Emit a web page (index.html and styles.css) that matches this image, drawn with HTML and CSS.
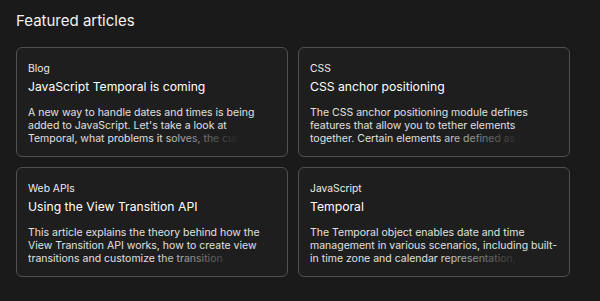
FILE: index.html
```html
<!DOCTYPE html>
<html lang="en">
<head>
    <meta charset="UTF-8">
    <meta name="viewport" content="width=device-width, initial-scale=1.0">
    <title>Featured articles</title>
    <link rel="stylesheet" href="styles.css">
</head>
<body>

<section class="featured">
    <h2>Featured articles</h2>

    <!-- Article cards -->
    <div class="card-grid">
        <a class="card" href="#">
            <span class="card-tag">Blog</span>
            <h3 class="card-title">JavaScript Temporal is coming</h3>
            <p class="card-text">A new way to handle dates and times is being added to JavaScript. Let's take a look at Temporal, what problems it solves, the current state, and what you'll find in the documentation.</p>
        </a>
        <a class="card" href="#">
            <span class="card-tag">CSS</span>
            <h3 class="card-title">CSS anchor positioning</h3>
            <p class="card-text">The CSS anchor positioning module defines features that allow you to tether elements together. Certain elements are defined as anchor elements; anchor-positioned elements can then have their size and position set.</p>
        </a>
        <a class="card" href="#">
            <span class="card-tag">Web APIs</span>
            <h3 class="card-title">Using the View Transition API</h3>
            <p class="card-text">This article explains the theory behind how the View Transition API works, how to create view transitions and customize the transition animations, and how to manipulate active view transitions.</p>
        </a>
        <a class="card" href="#">
            <span class="card-tag">JavaScript</span>
            <h3 class="card-title">Temporal</h3>
            <p class="card-text">The Temporal object enables date and time management in various scenarios, including built-in time zone and calendar representation, wall-clock time conversions, arithmetics, formatting, and more.</p>
        </a>
    </div>
</section>

</body>
</html>
```

FILE: styles.css
```css
body {
    margin: 0;
    background-color: #1a1a1a;
    color: #fff;
    font-family: Inter, "Noto Sans", sans-serif;
}
.featured {
    padding: 11px 16px 0;
    max-width: 554px;
}
.featured h2 {
    margin: 0 0 16px;
    font-size: 15px;
    font-weight: 400;
    line-height: 20px;
    color: #f2f2f2;
}
.card-grid {
    display: grid;
    grid-template-columns: repeat(2, 1fr);
    gap: 10px;
}
.card {
    display: flex;
    flex-direction: column;
    padding: 13px 11px 11px;
    border: 1px solid #505050;
    border-radius: 6px;
    background-color: #1e1e1e;
    color: inherit;
    text-decoration: none;
}
.card-tag {
    font-size: 10.3px;
    line-height: 14px;
    color: #ececec;
}
.card-title {
    margin: 3px 0 11px;
    font-size: 12.2px;
    font-weight: 400;
    line-height: 17px;
    color: #fff;
}
.card-text {
    position: relative;
    margin: 0;
    font-size: 10.5px;
    line-height: 13px;
    height: 39px;
    overflow: hidden;
    color: #e0e0e0;
}
/* fade out the end of the last line */
.card-text::after {
    content: "";
    position: absolute;
    right: 0;
    bottom: 0;
    width: 120px;
    height: 13px;
    background: linear-gradient(to right, rgba(30, 30, 30, 0), #1e1e1e 70%);
}
```
